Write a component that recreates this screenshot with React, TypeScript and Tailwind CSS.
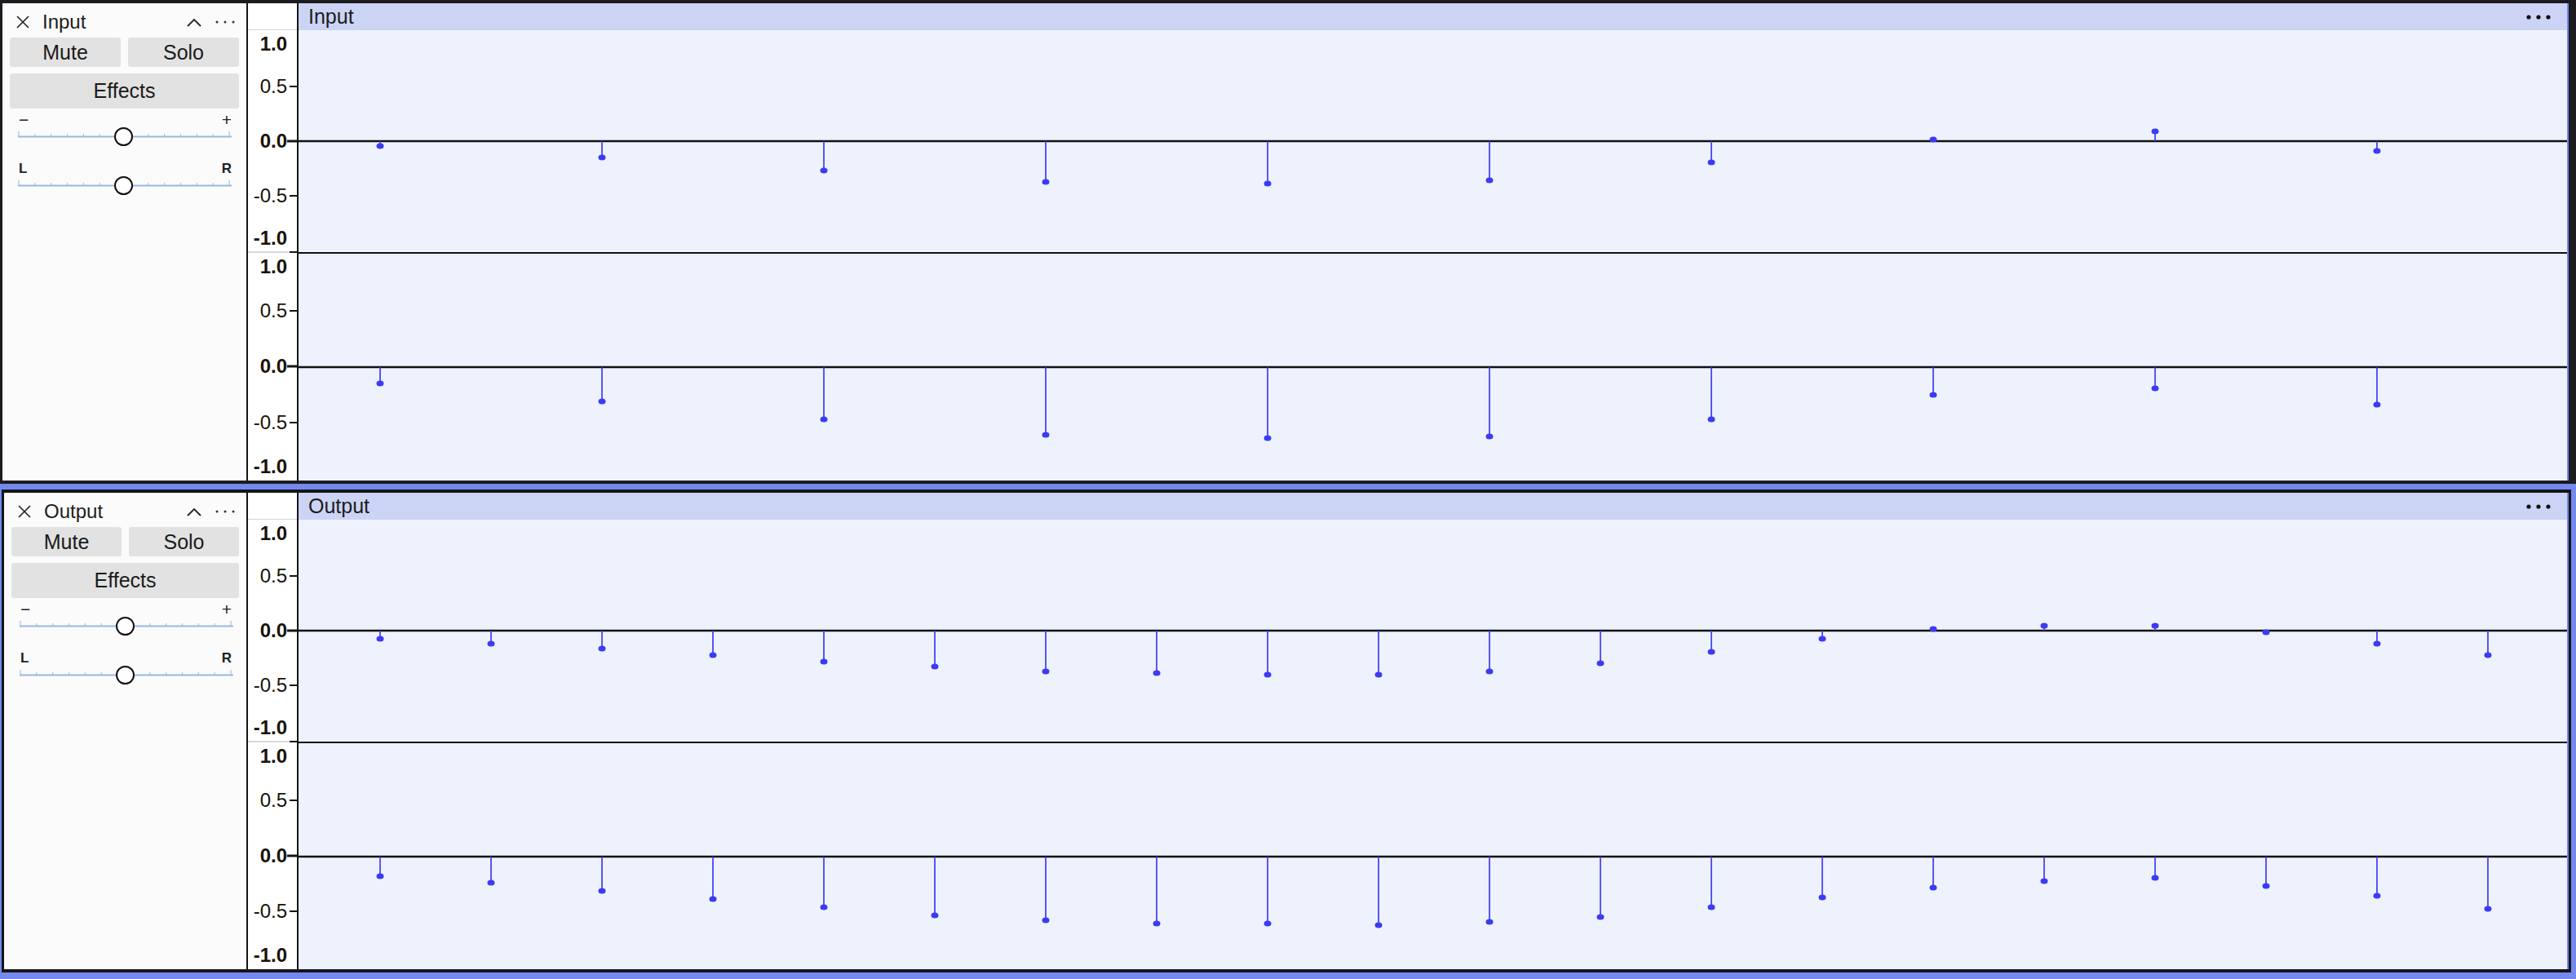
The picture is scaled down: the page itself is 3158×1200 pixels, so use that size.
import React from "react";

// dot offsets (px below the zero line) read off the reference
const inputLeft = [6, 20, 36, 50, 52, 48, 26, -2, -12, 12];
const inputRight = [20, 42, 64, 83, 87, 85, 64, 34, 26, 46];
const outputLeft = [10, 16, 22, 30, 38, 44, 50, 52, 54, 54, 50, 40, 26, 10, -2, -6, -6, 2, 16, 30];
const outputRight = [24, 32, 42, 52, 62, 72, 78, 82, 82, 84, 80, 74, 62, 50, 38, 30, 26, 36, 48, 64];

function CloseIcon() {
  return (
    <svg width="18" height="18" viewBox="0 0 18 18" className="shrink-0">
      <path d="M2 2 L16 16 M16 2 L2 16" stroke="#222" strokeWidth="1.6" fill="none" />
    </svg>
  );
}

function Slider({ left, right, bold }: { left: string; right: string; bold?: boolean }) {
  const ticks = Array.from({ length: 14 }, (_, i) => 2 + i * 19.85);
  return (
    <div className="ml-[18px] mr-[16px] flex flex-col">
      <div className={`flex h-[18px] items-center justify-between px-[2px] leading-none text-[#222] ${bold ? "text-[17px] font-semibold" : "text-[21px]"}`}>
        <span>{left}</span>
        <span>{right}</span>
      </div>
      <div className="relative h-[24px]">
        <svg width="264" height="24" className="block">
          {ticks.map((x, i) => (
            <line key={i} x1={x} x2={x} y1={i === 0 || i === 13 ? 6 : 9} y2={12} stroke="#a9c2e2" strokeWidth="1.2" />
          ))}
          <line x1="1" x2="263" y1="12.5" y2="12.5" stroke="#98b8e4" strokeWidth="2" />
        </svg>
        <div className="absolute left-[119px] top-[1px] h-[23px] w-[23px] rounded-full border-2 border-[#111] bg-white" />
      </div>
    </div>
  );
}

function Panel({ name, width }: { name: string; width: number }) {
  return (
    <div className="flex shrink-0 flex-col border-r-2 border-[#151515] bg-[#fbfbfb] pt-[6px]" style={{ width }}>
      <div className="flex h-[34px] items-center pl-[16px] pr-[14px]">
        <CloseIcon />
        <span className="ml-[15px] flex-1 text-[24px] leading-none text-[#1c1c1c]">{name}</span>
        <svg width="18" height="11" viewBox="0 0 18 11">
          <polyline points="1,10 9,2 17,10" stroke="#222" strokeWidth="1.8" fill="none" />
        </svg>
        <svg width="24" height="4" viewBox="0 0 24 4" className="ml-[17px]">
          <circle cx="2" cy="2" r="1.5" fill="#333" />
          <circle cx="12" cy="2" r="1.5" fill="#333" />
          <circle cx="22" cy="2" r="1.5" fill="#333" />
        </svg>
      </div>
      <div className="mt-[2px] flex gap-[9px] px-[9px]">
        <button className="h-[36px] flex-1 rounded-[3px] bg-[#e2e2e2] text-[25px] leading-none text-[#1a1a1a]">Mute</button>
        <button className="h-[36px] flex-1 rounded-[3px] bg-[#e2e2e2] text-[25px] leading-none text-[#1a1a1a]">Solo</button>
      </div>
      <button className="mx-[9px] mt-[8px] h-[43px] rounded-[3px] bg-[#e2e2e2] text-[25px] leading-none text-[#1a1a1a]">Effects</button>
      <div className="mt-[4px]">
        <Slider left="−" right="+" />
      </div>
      <div className="mt-[18px]">
        <Slider left="L" right="R" bold />
      </div>
    </div>
  );
}

function RulerChannel({ h }: { h: number }) {
  const zero = Math.round(h / 2);
  const half = h / 2 - 2;
  const labels = [
    { t: "1.0", y: 17, b: true },
    { t: "0.5", y: zero - half / 2, b: false },
    { t: "0.0", y: zero, b: true },
    { t: "-0.5", y: zero + half / 2, b: false },
    { t: "-1.0", y: h - 16, b: true },
  ];
  return (
    <div className="relative bg-white" style={{ height: h }}>
      {labels.map((l) => (
        <span
          key={l.t}
          className={`absolute right-[12px] -translate-y-1/2 text-[24px] leading-none text-[#1a1208] ${l.b ? "font-bold" : ""}`}
          style={{ top: l.y }}
        >
          {l.t}
        </span>
      ))}
      <div className="absolute right-0 h-[2px] w-[9px] -translate-y-1/2 bg-[#151515]" style={{ top: zero - half / 2 }} />
      <div className="absolute right-0 h-[3px] w-[12px] -translate-y-1/2 bg-[#151515]" style={{ top: zero }} />
      <div className="absolute right-0 h-[2px] w-[9px] -translate-y-1/2 bg-[#151515]" style={{ top: zero + half / 2 }} />
    </div>
  );
}

function Stems({ h, offsets, spacing }: { h: number; offsets: number[]; spacing: number }) {
  const zero = Math.round(h / 2);
  return (
    <svg width="2781" height={h} className="block bg-[#eef2fd]">
      <line x1="0" x2="2781" y1={zero} y2={zero} stroke="#111" strokeWidth="2.5" />
      {offsets.map((o, i) => {
        const x = 100 + i * spacing;
        const y = zero + o;
        return (
          <g key={i}>
            <line x1={x} x2={x} y1={zero} y2={y} stroke="#3b3bf3" strokeWidth="1.7" />
            <ellipse cx={x} cy={y} rx="4.5" ry="3.6" fill="#3b3bf3" />
          </g>
        );
      })}
    </svg>
  );
}

function Track({
  name,
  panelWidth,
  spacing,
  left,
  right,
  h1,
  h2,
}: {
  name: string;
  panelWidth: number;
  spacing: number;
  left: number[];
  right: number[];
  h1: number;
  h2: number;
}) {
  return (
    <div className="flex h-full">
      <Panel name={name} width={panelWidth} />
      <div className="flex w-[62px] shrink-0 flex-col border-r-2 border-[#151515] bg-white">
        <div className="h-[33px] border-b border-[#d4d4d4]" />
        <RulerChannel h={h1 - 1} />
        <div className="flex h-[2px] justify-end bg-[#d8d8d8]">
          <div className="w-[9px] bg-[#151515]" />
        </div>
        <RulerChannel h={h2} />
      </div>
      <div className="flex w-[2781px] flex-col">
        <div className="flex h-[33px] items-center justify-between bg-[#ccd4f5] pl-[12px] pr-[20px]">
          <span className="text-[25px] leading-none text-[#1c1c1c]">{name}</span>
          <svg width="30" height="6" viewBox="0 0 30 6">
            <circle cx="3" cy="3" r="2.6" fill="#111" />
            <circle cx="15" cy="3" r="2.6" fill="#111" />
            <circle cx="27" cy="3" r="2.6" fill="#111" />
          </svg>
        </div>
        <Stems h={h1} offsets={left} spacing={spacing} />
        <div className="h-[2px] bg-[#111]" />
        <Stems h={h2} offsets={right} spacing={spacing} />
      </div>
    </div>
  );
}

export default function App() {
  return (
    <div className="flex h-[1200px] w-[3158px] flex-col bg-[#7489ee] font-['Liberation_Sans',Arial,sans-serif]">
      <div className="h-[593px] shrink-0 border-b-4 border-l-[3px] border-r-[9px] border-t-4 border-[#1b1b20]">
        <Track name="Input" panelWidth={301} spacing={272} left={inputLeft} right={inputRight} h1={272} h2={278} />
      </div>
      <div className="flex-1 pb-[8px] pl-[2px] pr-[6px] pt-[7px]">
        <div className="h-[592px] border-b-4 border-l-[3px] border-r-[3px] border-t-4 border-[#15151a]">
          <Track name="Output" panelWidth={299} spacing={136} left={outputLeft} right={outputRight} h1={272} h2={277} />
        </div>
      </div>
    </div>
  );
}
